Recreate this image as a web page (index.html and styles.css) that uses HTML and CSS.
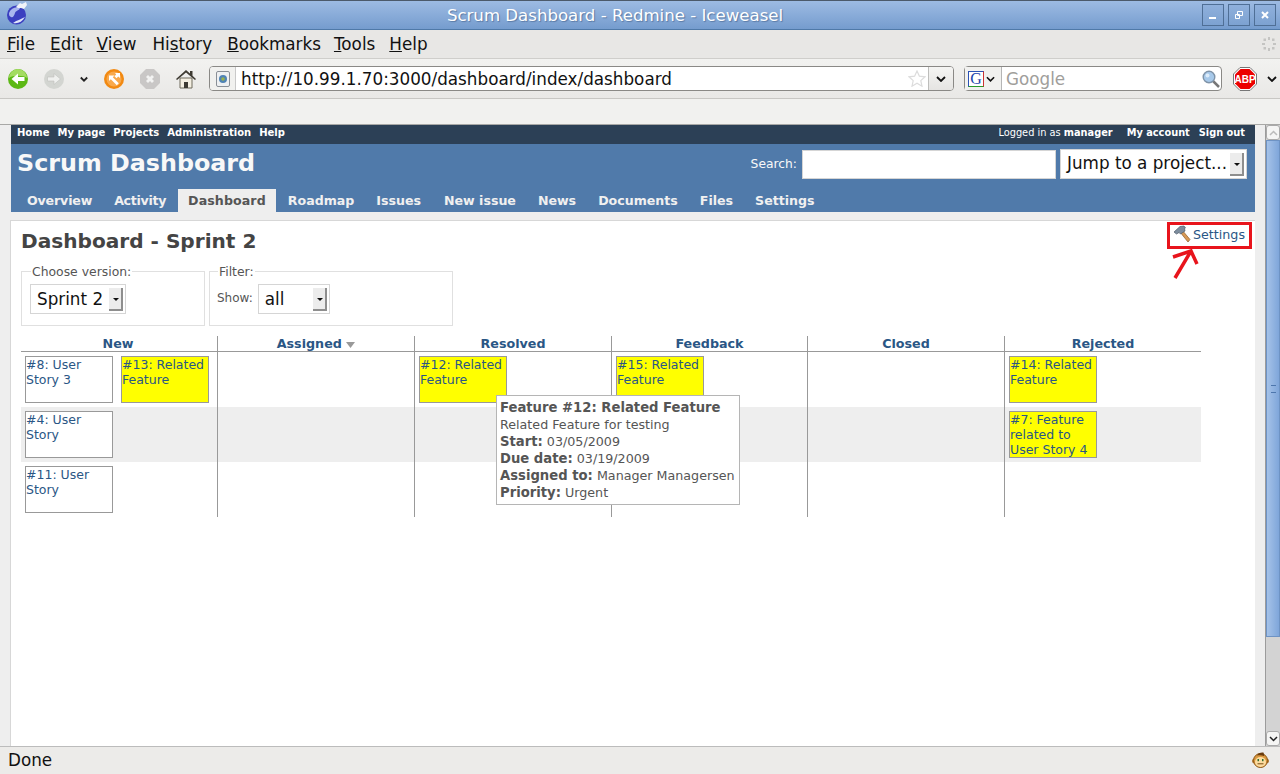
FILE: index.html
```html
<!DOCTYPE html>
<html lang="en">
<head>
<meta charset="utf-8">
<title>Scrum Dashboard - Redmine - Iceweasel</title>
<link rel="stylesheet" href="styles.css">
</head>
<body>
<div class="window">
  <header class="titlebar">
    <svg class="app-icon" width="22" height="24" viewBox="0 0 22 24"><circle cx="10.500" cy="14" r="9.500" fill="#3b3fc0"/><path d="M3 12c2-5 7-7 11-5-1 3-4 2-5 5s-2 5-4 4-2-2-2-4z" fill="#a9b6ee"/><path d="M7 22c5 1 9-1 12-6-3 2-8 3-12 6z" fill="#dfe4fa"/><path d="M10 6l4-4 2 1 4-2 1 3-3 4-3-1-3 0z" fill="#f1f3f8"/></svg>
    <div class="title-text">Scrum Dashboard - Redmine - Iceweasel</div>
    <div class="win-buttons">
      <div class="win-btn"><svg width="10" height="10" viewBox="0 0 10 10"><rect x="1" y="7" width="7" height="2" fill="#fff"/></svg></div>
      <div class="win-btn"><svg width="10" height="10" viewBox="0 0 10 10"><path d="M3.500 1.500h5v4h-5zM1.500 4.500h4v4h-4z" fill="none" stroke="#fff"/></svg></div>
      <div class="win-btn"><svg width="10" height="10" viewBox="0 0 10 10"><path d="M2 2l6 6M8 2l-6 6" stroke="#fff" stroke-width="2"/></svg></div>
    </div>
  </header>

  <nav class="menubar">
    <span class="menu-item m-file"><u>F</u>ile</span>
    <span class="menu-item m-edit"><u>E</u>dit</span>
    <span class="menu-item m-view"><u>V</u>iew</span>
    <span class="menu-item m-hist">Hi<u>s</u>tory</span>
    <span class="menu-item m-book"><u>B</u>ookmarks</span>
    <span class="menu-item m-tools"><u>T</u>ools</span>
    <span class="menu-item m-help"><u>H</u>elp</span>
    <svg class="throbber" width="16" height="16" viewBox="0 0 16 16"><g fill="#c4c4c2"><rect x="7" y="1" width="2" height="3"/><rect x="7" y="12" width="2" height="3"/><rect x="1" y="7" width="3" height="2"/><rect x="12" y="7" width="3" height="2"/><rect x="2.500" y="2.500" width="2.500" height="2.500"/><rect x="11" y="2.500" width="2.500" height="2.500"/><rect x="2.500" y="11" width="2.500" height="2.500"/><rect x="11" y="11" width="2.500" height="2.500"/></g></svg>
  </nav>

  <div class="toolbar">
    <div class="nav-icons">
      <svg width="20" height="22" viewBox="0 0 20 22"><circle cx="10" cy="11" r="10" fill="#5cb814"/><path d="M1 10a9 9 0 0 1 18 0c-3-3-15-3-18 0z" fill="#a4dc62"/><path d="M3.500 11l6.500-5.500V9h6.500v4H10v3.500z" fill="#fff"/></svg>
      <svg width="20" height="22" viewBox="0 0 20 22"><circle cx="10" cy="11" r="10" fill="#d3d5d1"/><path d="M16.500 11L10 5.500V9H3.500v4H10v3.500z" fill="#eff0ee" stroke="#bfc1bd" stroke-width=".6"/></svg>
      <svg width="8" height="22" viewBox="0 0 8 22"><path d="M.8 9.500L4 12.700 7.200 9.500" fill="none" stroke="#222" stroke-width="1.800"/></svg>
      <svg width="20" height="22" viewBox="0 0 20 22"><circle cx="10" cy="11" r="10" fill="#f28a12"/><circle cx="10" cy="11" r="7.500" fill="#f9a94c"/><path d="M11 5h5v5l-1.800-1.500-1.700 1.700-2-2 1.700-1.700zM5 7.500h5.500L8.800 9.200l6 6-2 2-6-6L5 13z" fill="#fff"/></svg>
      <svg width="20" height="22" viewBox="0 0 20 22"><path d="M6 1h8l6 6v8l-6 6H6l-6-6V7z" fill="#c9c7c6"/><path d="M6 9l2-2 2 2 2-2 2 2-2 2 2 2-2 2-2-2-2 2-2-2 2-2z" fill="#f3f3f2"/></svg>
      <svg width="20" height="22" viewBox="0 0 20 22"><path d="M4 10h12v10H4z" fill="#f4efe2" stroke="#6f6a5c"/><path d="M8 14h4v6H8z" fill="#3d3a33"/><path d="M0 11L10 2l4 3.600V3h2.500v4.800L20 11l-1 1L10 4.500 1 12z" fill="#3e3a32"/></svg>
    </div>
    <div class="urlbar">
      <span class="site-btn"><svg width="14" height="16" viewBox="0 0 14 16"><rect x=".5" y=".5" width="13" height="15" rx="1.500" fill="#eef0f2" stroke="#8a8f96"/><circle cx="7" cy="8" r="4" fill="#4f83b5"/><circle cx="7" cy="8" r="1.800" fill="#9ab24c"/></svg></span>
      <span class="url-text">http://10.99.1.70:3000/dashboard/index/dashboard</span>
      <svg class="star" width="18" height="17" viewBox="0 0 18 17"><path d="M9 1l2.400 5.200 5.600.6-4.200 3.800 1.200 5.600L9 13.300l-5 2.900 1.200-5.600L1 6.800l5.600-.6z" fill="#fff" stroke="#dcdcdc" stroke-width="1.200"/></svg>
      <span class="url-drop"><svg width="10" height="6" viewBox="0 0 10 6"><path d="M1 1l4 4 4-4" fill="none" stroke="#111" stroke-width="1.800"/></svg></span>
    </div>
    <div class="searchbar">
      <span class="engine">
        <span class="g-logo">G</span>
        <svg width="9" height="6" viewBox="0 0 10 6"><path d="M1 1l4 4 4-4" fill="none" stroke="#111" stroke-width="1.800"/></svg>
      </span>
      <span class="search-ph">Google</span>
      <svg class="loupe" width="18" height="18" viewBox="0 0 18 18"><path d="M11 11l6 6" stroke="#777" stroke-width="2.500"/><circle cx="7" cy="7" r="5.800" fill="#a7c9ea" stroke="#7f93a8" stroke-width="1.400"/><circle cx="5.500" cy="5.500" r="2" fill="#dcecfa"/></svg>
    </div>
    <svg class="abp" width="24" height="24" viewBox="0 0 24 24"><path d="M7 .5h10L23.500 7v10L17 23.500H7L.5 17V7z" fill="#fff" stroke="#777"/><path d="M7.500 2h9L22 7.500v9L16.500 22h-9L2 16.500v-9z" fill="#ec0000"/><text x="12" y="16" text-anchor="middle" class="abp-text">ABP</text></svg>
    <svg class="abp-drop" width="10" height="6" viewBox="0 0 10 6"><path d="M1 1l4 4 4-4" fill="none" stroke="#111" stroke-width="1.800"/></svg>
  </div>

  <div class="bookmarks"></div>

  <div class="viewport">
    <div class="page">
      <div class="top-menu">
        <div class="top-left">
          <a>Home</a><a>My page</a><a>Projects</a><a>Administration</a><a>Help</a>
        </div>
        <div class="top-right">
          <span class="logged">Logged in as <b>manager</b></span><a>My account</a><a>Sign out</a>
        </div>
      </div>
      <div class="header">
        <div class="header-main">
          <h1>Scrum Dashboard</h1>
          <div class="quick">
            <span class="search-label">Search:</span>
            <span class="search-input"></span>
            <span class="select jump"><span class="sel-text">Jump to a project...</span><span class="sel-btn"></span></span>
          </div>
        </div>
        <ul class="tabs">
          <li class="t-overview">Overview</li><li class="t-activity">Activity</li><li class="selected">Dashboard</li><li>Roadmap</li><li class="t-issues">Issues</li><li>New issue</li><li>News</li><li>Documents</li><li>Files</li><li>Settings</li>
        </ul>
      </div>
      <div class="main">
        <div class="content">
          <div class="contextual">
            <svg width="18" height="18" viewBox="0 0 18 18"><path d="M7 7l2-2 8 9.500-2 2.500z" fill="#d99a55" stroke="#8a5a28" stroke-width=".7"/><path d="M1 7l6-5.500 4-.500 1.500 2-1 .5L12 6 7.500 9 6 7.500 3.500 9z" fill="#7d8d9e" stroke="#4e5a68" stroke-width=".7"/></svg>
            <a>Settings</a>
          </div>
          <h2>Dashboard - Sprint 2</h2>
          <div class="filters">
            <fieldset class="fs fs-version">
              <legend>Choose version:</legend>
              <span class="select small"><span class="sel-text">Sprint 2</span><span class="sel-btn"></span></span>
            </fieldset>
            <fieldset class="fs fs-filter">
              <legend>Filter:</legend>
              <label>Show:</label>
              <span class="select small show"><span class="sel-text">all</span><span class="sel-btn"></span></span>
            </fieldset>
          </div>
          <div class="board-wrap">
            <div class="board">
              <div class="head">New</div>
              <div class="head">Assigned <svg width="9" height="6" viewBox="0 0 9 6"><path d="M0 0h9L4.500 6z" fill="#999"/></svg></div>
              <div class="head">Resolved</div>
              <div class="head">Feedback</div>
              <div class="head">Closed</div>
              <div class="head">Rejected</div>

              <div class="cell"><a class="card">#8: User Story 3</a><a class="card feature">#13: Related Feature</a></div>
              <div class="cell"></div>
              <div class="cell"><a class="card feature">#12: Related Feature</a></div>
              <div class="cell"><a class="card feature">#15: Related Feature</a></div>
              <div class="cell"></div>
              <div class="cell"><a class="card feature">#14: Related Feature</a></div>

              <div class="cell even"><a class="card">#4: User Story</a></div>
              <div class="cell even"></div>
              <div class="cell even"></div>
              <div class="cell even"></div>
              <div class="cell even"></div>
              <div class="cell even"><a class="card feature">#7: Feature related to User Story 4</a></div>

              <div class="cell"><a class="card">#11: User Story</a></div>
              <div class="cell"></div>
              <div class="cell"></div>
              <div class="cell"></div>
              <div class="cell"></div>
              <div class="cell"></div>
            </div>
            <div class="tooltip">
              <b>Feature #12: Related Feature</b><br>
              Related Feature for testing<br>
              <b>Start:</b> 03/05/2009<br>
              <b>Due date:</b> 03/19/2009<br>
              <b>Assigned to:</b> Manager Managersen<br>
              <b>Priority:</b> Urgent
            </div>
          </div>
        </div>
        <div class="callout"></div>
        <svg class="arrow" width="30" height="36" viewBox="0 0 30 36"><path d="M3 30L19 3M1 9l18-6 6 13" fill="none" stroke="#e8141c" stroke-width="3.500"/></svg>
      </div>
    </div>
    <div class="scrollbar">
      <div class="sb-btn"><svg width="9" height="6" viewBox="0 0 9 6"><path d="M1 5l3.500-3.500L8 5" fill="none" stroke="#bbb" stroke-width="1.500"/></svg></div>
      <div class="sb-thumb"><span></span></div>
      <div class="sb-track"></div>
      <div class="sb-btn"><svg width="9" height="6" viewBox="0 0 9 6"><path d="M1 1l3.500 3.500L8 1" fill="none" stroke="#222" stroke-width="1.500"/></svg></div>
    </div>
  </div>

  <footer class="statusbar">
    <span>Done</span>
    <svg width="17" height="16" viewBox="0 0 17 16"><circle cx="2" cy="9" r="1.800" fill="#d99a45" stroke="#8a5413" stroke-width=".6"/><circle cx="15" cy="9" r="1.800" fill="#d99a45" stroke="#8a5413" stroke-width=".6"/><circle cx="8.500" cy="8.500" r="7" fill="#d9973f" stroke="#8a5413"/><ellipse cx="8.500" cy="10" rx="5.500" ry="5" fill="#fcdca0"/><path d="M5 3.500C6 1 9 0 11.500 .5c0 1 1 2 .5 3.500-2-1-5-1-7-.5z" fill="#6a3b0e"/><rect x="5.500" y="7" width="1.500" height="2.200" fill="#2d6b2d"/><rect x="10" y="7" width="1.500" height="2.200" fill="#2d6b2d"/><path d="M5.500 11.800h6" stroke="#7a4a12"/></svg>
  </footer>
</div>
</body>
</html>
```

FILE: styles.css
```css
* { box-sizing: border-box; }
html, body { margin: 0; padding: 0; height: 100%; overflow: hidden; }
body { font-family: "DejaVu Sans", sans-serif; background: #eaeaea; }
a { color: #2a5685; text-decoration: none; }
.window { width: 1280px; height: 774px; display: flex; flex-direction: column; }

.titlebar { height: 30px; flex: none; display: flex; align-items: center; position: relative; padding: 0 4px 0 6px;
  background: linear-gradient(#9dbbe3, #759cce); border-top: 1px solid #4c5a6b; border-bottom: 1px solid #4f79a8; }
.app-icon { flex: none; margin-top: -4px; }
.title-text { flex: 1; text-align: center; color: #fff; font-size: 16.600px; text-shadow: 1px 1px 1px #5a7aa5; }
.win-buttons { display: flex; gap: 4px; }
.win-btn { width: 22px; height: 22px; border: 1px solid #4f6f96; display: flex; align-items: center; justify-content: center; background: linear-gradient(#8fb0dc, #7da2d1); }

.menubar { height: 29px; flex: none; background: #e8e7e5; display: flex; align-items: center; padding-left: 7px; border-bottom: 1px solid #cfcecb; font-size: 16.800px; color: #111; }
.menu-item { white-space: nowrap; }
.m-edit { margin-left: 15px; }
.m-view { margin-left: 14px; }
.m-hist { margin-left: 16px; }
.m-book { margin-left: 15px; }
.m-tools { margin-left: 13px; }
.m-help { margin-left: 14px; }
.throbber { margin-left: auto; margin-right: 3px; }

.toolbar { height: 40px; flex: none; background: linear-gradient(#f2f2f0, #e9e8e6); border-bottom: 1px solid #c8c7c4; display: flex; align-items: center; padding-left: 8px; }
.nav-icons { display: flex; gap: 16px; align-items: center; }
.urlbar { margin-left: 13px; width: 745px; height: 25px; border: 1px solid #8a8986; border-radius: 4px; background: #fff; display: flex; align-items: center; }
.site-btn { width: 26px; height: 23px; display: flex; align-items: center; justify-content: center; border-right: 1px solid #c9c9c9; background: #f1f1ef; flex: none; border-radius: 3px 0 0 3px; }
.url-text { font-size: 16.800px; margin-left: 5px; color: #111; white-space: nowrap; }
.star { margin-left: auto; margin-right: 2px; }
.url-drop { width: 25px; height: 23px; flex: none; display: flex; align-items: center; justify-content: center; border-left: 1px solid #bdbdbb; background: linear-gradient(#f5f5f3, #e5e4e2); border-radius: 0 3px 3px 0; }
.searchbar { margin-left: 10px; width: 258px; height: 25px; border: 1px solid #8a8986; border-radius: 4px; background: #fff; display: flex; align-items: center; }
.engine { width: 37px; height: 23px; flex: none; display: flex; align-items: center; gap: 2px; padding-left: 3px; border-right: 1px solid #b5b5b5; background: #f1f1ef; }
.g-logo { width: 16px; height: 16px; border: 1px solid; border-color: #2b52b5 #c33 #2a9a2a #2b52b5; background: #fff; color: #1c45ad; font-family: "Liberation Serif", serif; font-size: 16px; line-height: 14px; text-align: center; }
.search-ph { font-size: 16.800px; color: #a09e9b; margin-left: 4px; }
.loupe { margin-left: auto; margin-right: 1px; }
.abp { margin-left: 11px; }
.abp-text { font-family: "Liberation Sans", sans-serif; font-weight: 700; font-size: 10px; fill: #fff; }
.abp-drop { margin-left: 10px; }

.bookmarks { height: 26px; flex: none; background: #f1f1ef; border-bottom: 1px solid #a8a8a6; }

.viewport { height: 622px; flex: none; display: flex; background: #eee; border-bottom: 1px solid #bcbcbc; }
.page { width: 1265px; height: 100%; padding: 0 10px 0 11px; background: #eee; display: flex; flex-direction: column; }

.top-menu { height: 19px; flex: none; background: #2c4056; color: #fff; font-weight: 700; display: flex; justify-content: space-between; align-items: center; padding: 0 10px 4px 6px; }
.top-menu a { color: #fff; }
.top-left { font-size: 10px; }
.top-left a { margin-right: 8px; }
.top-right { font-size: 9.800px; }
.top-right a { margin-left: 14px; }
.top-right a + a { margin-left: 9px; }
.logged { font-weight: 400; }
.header { height: 68px; flex: none; background: #507aaa; color: #f8f8f8; display: flex; flex-direction: column; }
.header-main { height: 45px; display: flex; justify-content: space-between; align-items: flex-start; }
h1 { margin: 3px 0 0 6px; font-size: 23.800px; line-height: 32px; font-weight: 700; }
.quick { display: flex; align-items: center; margin: 5px 8px 0 0; }
.search-label { font-size: 12.300px; margin-right: 5px; }
.search-input { width: 254px; height: 29px; background: #fff; border: 1px solid #d5d5d5; margin-right: 4px; }
.select { display: inline-flex; align-items: center; background: #fff; border: 1px solid #d5d5d5; color: #111; position: relative; font-size: 16.800px; }
.jump { width: 187px; height: 30px; padding: 0 0 2px 6px; }
.sel-btn { position: absolute; right: 2px; top: 3px; bottom: 2px; width: 14px; background: #ececec; border-right: 2px solid #8e8e8e; border-bottom: 2px solid #8e8e8e; }
.sel-btn::after { content: ""; position: absolute; left: 4px; top: 50%; margin-top: -1px; border: 3px solid transparent; border-top: 3px solid #111; }
.tabs { list-style: none; margin: 0; padding: 0 0 0 6px; display: flex; height: 23px; align-items: stretch; font-size: 12.600px; font-weight: 700; }
.tabs li { padding: 0 10px; margin-right: 2px; line-height: 23px; color: #f0f0f0; }
.tabs li.t-overview { letter-spacing: -.15px; }
.tabs li.t-activity { letter-spacing: -.3px; }
.tabs li.t-issues { margin-right: 3px; }
.tabs li.selected { background: #eee; color: #555; letter-spacing: .1px; }

.main { flex: 1; padding-top: 8px; position: relative; min-height: 0; }
.content { height: 100%; background: #fff; border: 1px solid #d7d7d7; margin-left: -1px; border-right: 0; border-bottom: 0; padding: 0 10px; position: relative; color: #484848; }
.contextual { position: absolute; right: 10px; top: 4px; display: flex; align-items: center; gap: 2px; font-size: 12.700px; }
h2 { margin: 0; padding-top: 7px; font-size: 20.100px; line-height: 26px; color: #444; font-weight: 700; }
.filters { display: flex; gap: 4px; margin-top: 10px; }
.fs { margin: 0; padding: 5px 8px 0 8px; border: 1px solid #e0e0e0; height: 62px; display: flex; align-items: flex-start; min-width: 0; font-size: 12px; }
.fs legend { padding: 0 1px; font-size: 12.400px; margin-left: 1px; color: #555; }
.fs-version { width: 184px; }
.fs-filter { width: 244px; padding-left: 7px; }
.fs label { margin: 7px 5px 0 0; color: #555; }
.small { height: 30px; width: 96px; padding-left: 6px; }
.show { width: 72px; }

.board-wrap { position: relative; margin-top: 10px; width: 1180px; }
.board { display: grid; grid-template-columns: 196px 197px 197px 196px 197px 197px; grid-template-rows: 16px 55px 55px 55px; font-size: 12.500px; }
.head { text-align: center; font-weight: 700; font-size: 12.700px; line-height: 16px; color: #2a5685; border-bottom: 1px solid #999; border-left: 1px solid #999; }
.head:first-child { padding-right: 2px; }
.head:first-child, .cell:nth-child(6n+1) { border-left: 0; }
.cell { border-left: 1px solid #999; padding: 4px 0 0 4px; display: flex; gap: 8px; align-items: flex-start; }
.even { background: #eee; }
.card { width: 88px; height: 47px; padding: 0; border: 1px solid #999; background: #fff; line-height: 15px; flex: none; display: block; }
.feature { background: #ff0; }
.tooltip { position: absolute; left: 475px; top: 59px; width: 244px; height: 110px; background: #fff; border: 1px solid #b5b5b5; padding: 3px 3px; font-size: 12.700px; line-height: 17px; color: #555; white-space: nowrap; }
.tooltip b { font-size: 13.200px; }
.callout { position: absolute; right: 3px; top: 10px; width: 85px; height: 27px; border: 3px solid #e8141c; }
.arrow { position: absolute; left: 1161px; top: 36px; }

.scrollbar { width: 15px; flex: none; height: 100%; display: flex; flex-direction: column; background: #d3d3d3; border-left: 1px solid #9b9b9b; }
.sb-btn { height: 15px; flex: none; background: #f5f5f4; border: 1px solid #aaa; border-radius: 3px; display: flex; align-items: center; justify-content: center; }
.sb-thumb { height: 497px; flex: none; background: linear-gradient(90deg, #a5c2e8, #7fa6da); border: 1px solid #6e93c4; display: flex; align-items: center; justify-content: center; }
.sb-thumb span { width: 5px; height: 8px; border-top: 1px solid #4d76ad; border-bottom: 1px solid #4d76ad; }
.sb-track { flex: 1; }
.statusbar { flex: 1; background: #ecebe9; display: flex; align-items: center; justify-content: space-between; padding: 0 11px 2px 8px; font-size: 16.800px; color: #111; }
```
